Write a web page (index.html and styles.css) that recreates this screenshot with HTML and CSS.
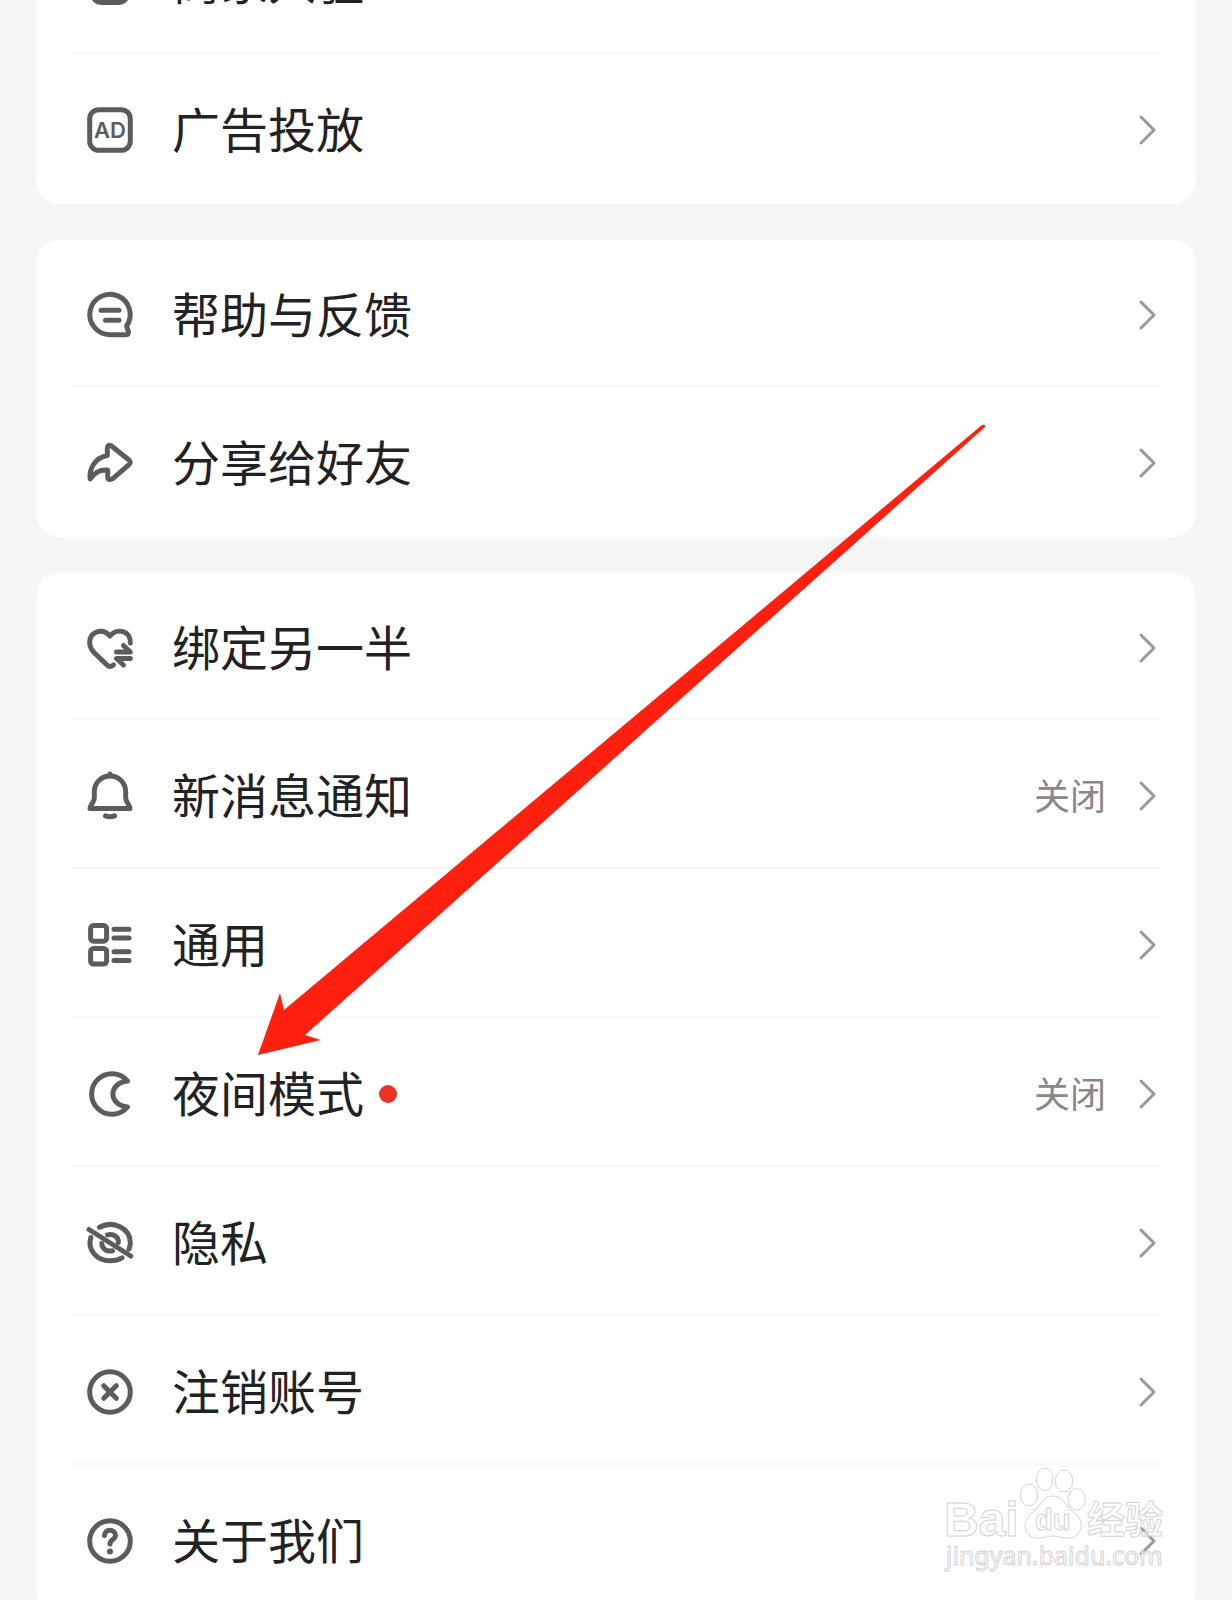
FILE: index.html
```html
<!DOCTYPE html>
<html lang="zh-CN">
<head>
    <meta charset="UTF-8">
    <meta name="viewport" content="width=device-width, initial-scale=1.0">
    <title>设置</title>
    <link rel="stylesheet" href="styles.css">
</head>
<body>
    <svg class="symbols" aria-hidden="true">
        <symbol id="chevron" viewBox="0 0 20 32">
            <path d="M3 3 L16 16 L3 29"/>
        </symbol>
    </svg>

    <main class="settings">
        <ul class="card">
            <li><a class="row" href="#">
                <svg class="icon" viewBox="0 0 48 48"><rect x="7" y="3.5" width="34" height="41" rx="8"/></svg>
                <span class="label">商家入驻</span>
                <svg class="chevron"><use href="#chevron"/></svg>
            </a></li>
            <li><a class="row" href="#">
                <svg class="icon" viewBox="0 0 48 48">
                    <rect x="3.7" y="3.7" width="40.6" height="40.6" rx="9"/>
                    <text class="icon-text" x="24" y="32" text-anchor="middle">AD</text>
                </svg>
                <span class="label">广告投放</span>
                <svg class="chevron"><use href="#chevron"/></svg>
            </a></li>
        </ul>

        <ul class="card">
            <li><a class="row" href="#">
                <svg class="icon" viewBox="0 0 48 48">
                    <path d="M24 43.7 A20.2 20.2 0 1 1 40.6 35 L42.4 40.5 Q43 43.7 40 43.7 Z"/>
                    <path d="M15 19.3 H33 M19.5 29.3 H33"/>
                </svg>
                <span class="label">帮助与反馈</span>
                <svg class="chevron"><use href="#chevron"/></svg>
            </a></li>
            <li><a class="row" href="#">
                <svg class="icon" viewBox="0 0 48 48">
                    <path d="M21.3 16.5 V9 Q21.5 5 25.5 7 L43 21 Q45.5 23.3 43 25.6 L26.5 39.8 Q22 42 21.7 38 V31 C12 30.5 9 34 4.2 39.8 C3 31 8 19 21.3 16.5 Z"/>
                </svg>
                <span class="label">分享给好友</span>
                <svg class="chevron"><use href="#chevron"/></svg>
            </a></li>
        </ul>

        <ul class="card">
            <li><a class="row" href="#">
                <svg class="icon" viewBox="0 0 48 48">
                    <path d="M44.3 19 C45 6.5 31 3.5 24 12 C16.5 3.5 3.7 7.5 3.7 18.5 C3.7 23 5.5 26 8.5 29 L21 41 Q24 44 27.5 40.8"/>
                    <path d="M30.5 28 H44.3 L37.5 21.5 M44.3 34.5 H30.5 L37.5 41"/>
                </svg>
                <span class="label">绑定另一半</span>
                <svg class="chevron"><use href="#chevron"/></svg>
            </a></li>
            <li><a class="row" href="#">
                <svg class="icon" viewBox="0 0 48 48">
                    <path d="M24 4 C15 4 8.3 11 8.3 20 V26 C8.3 30.5 4 33 4 36.5 H44 C44 33 39.7 30.5 39.7 26 V20 C39.7 11 33 4 24 4 Z"/>
                    <path d="M24 2 V4 M19.5 43.8 Q24 45.5 28.5 43.8"/>
                </svg>
                <span class="label">新消息通知</span>
                <span class="value">关闭</span>
                <svg class="chevron"><use href="#chevron"/></svg>
            </a></li>
            <li><a class="row" href="#">
                <svg class="icon" viewBox="0 0 48 48">
                    <rect x="4.6" y="4.6" width="16" height="15.6" rx="3"/>
                    <rect x="4.6" y="27.4" width="16" height="15.6" rx="3"/>
                    <path d="M28 8.3 H43 M28 17 H43 M28 30.7 H43 M28 39.4 H43"/>
                </svg>
                <span class="label">通用</span>
                <svg class="chevron"><use href="#chevron"/></svg>
            </a></li>
            <li><a class="row" href="#">
                <svg class="icon" viewBox="0 0 48 48">
                    <path d="M41.5 11 A20.3 20.3 0 1 0 41.5 37 C22 35 22 13 41.5 11 Z"/>
                </svg>
                <span class="label label-new">夜间模式</span>
                <span class="value">关闭</span>
                <svg class="chevron"><use href="#chevron"/></svg>
            </a></li>
            <li><a class="row" href="#">
                <svg class="icon" viewBox="0 0 48 48">
                    <path d="M3 10.5 L44.8 37"/>
                    <path d="M13.5 8.3 C27 1 44.3 9 44.3 23.7 Q44.3 27 43 30"/>
                    <path d="M4.8 18.5 C1 31 11 41.7 24 41.7 Q31 41.7 36 38.8"/>
                    <path d="M21.5 15.8 C28 14 33 19 32.3 23.5 M15.8 24.5 C16 30 21 33 26.5 31.8"/>
                </svg>
                <span class="label">隐私</span>
                <svg class="chevron"><use href="#chevron"/></svg>
            </a></li>
            <li><a class="row" href="#">
                <svg class="icon" viewBox="0 0 48 48">
                    <circle cx="24" cy="24" r="20.3"/>
                    <path d="M17.7 17.7 L30.3 30.3 M30.3 17.7 L17.7 30.3"/>
                </svg>
                <span class="label">注销账号</span>
                <svg class="chevron"><use href="#chevron"/></svg>
            </a></li>
            <li><a class="row" href="#">
                <svg class="icon" viewBox="0 0 48 48">
                    <circle cx="24" cy="24" r="20.3"/>
                    <path d="M18.5 18.5 C18.5 11.5 29.5 11.8 29.5 18.5 C29.5 22.5 24 22.5 24 27"/>
                    <circle class="icon-dot" cx="24" cy="34.5" r="3"/>
                </svg>
                <span class="label">关于我们</span>
                <svg class="chevron"><use href="#chevron"/></svg>
            </a></li>
        </ul>
    </main>

    <!-- arrow pointing at the night mode row -->
    <svg class="pointer" viewBox="0 0 730 632" aria-hidden="true">
        <path d="M0 631 L22 569 L26 586 L724 1 Q728 0 727 3 L47 611 L63 616 Z"/>
    </svg>

    <svg class="watermark" viewBox="0 0 224 112">
        <text class="wm-brand" x="0" y="70">Bai</text>
        <ellipse cx="85" cy="29" rx="8.7" ry="11"/>
        <ellipse cx="100.7" cy="13.3" rx="8.3" ry="11.3"/>
        <ellipse cx="120" cy="15" rx="8.7" ry="11"/>
        <ellipse cx="132.7" cy="33.3" rx="8.7" ry="10.7"/>
        <path d="M109 30 C119 30 121 39 127 44 C134 49 138 54 137 61 C136 69 130 72 123 72 C117 72 114 70 109 70 C104 70 101 72 95 72 C87 72 81 68 81 60 C81 53 86 49 91 44 C97 39 99 30 109 30 Z"/>
        <text class="wm-du" x="91" y="64">du</text>
        <text class="wm-cn" x="143" y="67">经验</text>
        <text class="wm-url" x="2" y="99">jingyan.baidu.com</text>
    </svg>
</body>
</html>
```
FILE: styles.css
```css
* {
    box-sizing: border-box;
}
body {
    position: relative;
    height: 100vh;
    margin: 0;
    overflow: hidden;
    background-color: #f6f6f6;
    font-family: "Noto Sans CJK SC", sans-serif;
    color: #222;
}
.symbols {
    display: none;
}
/* the list is scrolled part of the way through its first row */
.settings {
    display: flex;
    flex-direction: column;
    gap: 36px;
    margin-top: -93px;
    padding: 0 36px;
}
.card {
    margin: 0;
    padding: 0 36px 3px;
    list-style: none;
    background: #fff;
    border-radius: 24px;
}
.card li + li {
    border-top: 2px solid #f7f7f7;
}
.row {
    display: flex;
    align-items: center;
    height: 147px;
    padding: 4px 2px 0 14px;
    color: inherit;
    text-decoration: none;
}
.card li:first-child .row {
    height: 145px;
}
.icon {
    flex: none;
    width: 48px;
    height: 48px;
    margin-right: 38px;
    overflow: visible;
    fill: none;
    stroke: #5c5c5c;
    stroke-width: 5;
    stroke-linecap: round;
    stroke-linejoin: round;
}
.icon-text {
    fill: #5c5c5c;
    stroke: none;
    font-family: Inter, sans-serif;
    font-size: 22px;
    font-weight: 600;
}
.icon-dot {
    fill: #5c5c5c;
    stroke: none;
}
.label {
    flex: 1;
    padding-bottom: 6px;
    font-size: 48px;
    line-height: 64px;
}
.label-new::after {
    content: "";
    display: inline-block;
    width: 18px;
    height: 18px;
    margin-left: 15px;
    vertical-align: 9px;
    border-radius: 50%;
    background: #e93323;
}
.value {
    margin-right: 32px;
    padding-bottom: 4px;
    font-size: 36px;
    color: #888;
}
.chevron {
    flex: none;
    width: 20px;
    height: 32px;
    fill: none;
    stroke: #999;
    stroke-width: 3;
    stroke-linecap: round;
    stroke-linejoin: round;
}
.pointer {
    position: absolute;
    top: 424px;
    left: 258px;
    width: 730px;
    height: 632px;
    fill: #ff2010;
    pointer-events: none;
}
.watermark {
    position: absolute;
    top: 1466px;
    right: 64px;
    width: 224px;
    height: 112px;
    overflow: visible;
    fill: rgba(255, 255, 255, 0.6);
    stroke: #d4d4d4;
    stroke-width: 1;
    font-family: "Liberation Sans", "Noto Sans CJK SC", sans-serif;
    font-weight: bold;
    pointer-events: none;
}
.wm-brand {
    font-size: 48px;
}
.wm-du {
    font-size: 29px;
}
.wm-cn {
    font-size: 38px;
}
.wm-url {
    font-family: "Noto Sans", sans-serif;
    font-size: 25px;
    font-weight: normal;
}
```
